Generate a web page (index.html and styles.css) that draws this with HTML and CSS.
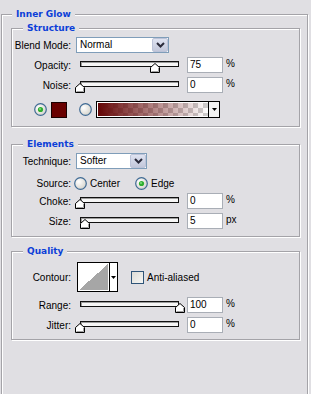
FILE: index.html
```html
<!DOCTYPE html>
<html>
<head>
<meta charset="utf-8">
<link rel="stylesheet" href="styles.css">
</head>
<body>
<div class="panel">
  <div class="group outer">
    <div class="legend">Inner Glow</div>

    <div class="group sub structure">
      <div class="legend">Structure</div>
      <div class="row r-blend">
        <span class="lbl">Blend Mode:</span>
        <div class="combo combo-blend">
          <span class="combo-val">Normal</span>
          <span class="combo-btn"><svg width="9" height="6" viewBox="0 0 9 6"><polyline points="1,1 4.5,4.5 8,1" fill="none" stroke="#2a2a3a" stroke-width="2"/></svg></span>
        </div>
      </div>
      <div class="row r-slider r-first">
        <span class="lbl">Opacity:</span>
        <div class="slider"><div class="track"></div><svg class="thumb" style="left:76px" width="10" height="10" viewBox="0 0 10 10"><polygon points="0.5,4.5 5,0.5 9.5,4.5 9.5,9.5 0.5,9.5" fill="#fff" stroke="#000"/><polyline points="8.5,5 8.5,8.5 1.5,8.5" fill="none" stroke="#a0a0a0"/></svg></div>
        <div class="num">75</div><span class="unit">%</span>
      </div>
      <div class="row r-slider">
        <span class="lbl">Noise:</span>
        <div class="slider"><div class="track"></div><svg class="thumb" style="left:1px" width="10" height="10" viewBox="0 0 10 10"><polygon points="0.5,4.5 5,0.5 9.5,4.5 9.5,9.5 0.5,9.5" fill="#fff" stroke="#000"/><polyline points="8.5,5 8.5,8.5 1.5,8.5" fill="none" stroke="#a0a0a0"/></svg></div>
        <div class="num">0</div><span class="unit">%</span>
      </div>
      <div class="row r-color">
        <svg class="radio r-first-radio" width="13" height="13" viewBox="0 0 13 13"><defs><radialGradient id="rg1" cx="0.35" cy="0.35" r="0.7"><stop offset="0" stop-color="#ffffff"/><stop offset="1" stop-color="#d6d4cc"/></radialGradient></defs><circle cx="6.5" cy="6.5" r="5.8" fill="url(#rg1)" stroke="#3f6a94" stroke-width="1.2"/><circle cx="6.5" cy="6.5" r="2.6" fill="#2fae2f"/><circle cx="6" cy="6" r="1" fill="#7fdc7f"/></svg>
        <div class="swatch"></div>
        <svg class="radio r-second-radio" width="13" height="13" viewBox="0 0 13 13"><defs><radialGradient id="rg2" cx="0.35" cy="0.35" r="0.7"><stop offset="0" stop-color="#ffffff"/><stop offset="1" stop-color="#d6d4cc"/></radialGradient></defs><circle cx="6.5" cy="6.5" r="5.8" fill="url(#rg2)" stroke="#3f6a94" stroke-width="1.2"/></svg>
        <div class="gradbox">
          <div class="grad"></div>
          <div class="drop"><svg width="5" height="3" viewBox="0 0 5 3"><polygon points="0,0 5,0 2.5,3" fill="#000"/></svg></div>
        </div>
      </div>
    </div>

    <div class="group sub elements">
      <div class="legend">Elements</div>
      <div class="row r-tech">
        <span class="lbl">Technique:</span>
        <div class="combo combo-tech">
          <span class="combo-val">Softer</span>
          <span class="combo-btn"><svg width="9" height="6" viewBox="0 0 9 6"><polyline points="1,1 4.5,4.5 8,1" fill="none" stroke="#2a2a3a" stroke-width="2"/></svg></span>
        </div>
      </div>
      <div class="row r-source">
        <span class="lbl">Source:</span>
        <label class="opt opt-center">
          <svg class="radio" width="13" height="13" viewBox="0 0 13 13"><defs><radialGradient id="rg3" cx="0.35" cy="0.35" r="0.7"><stop offset="0" stop-color="#ffffff"/><stop offset="1" stop-color="#d6d4cc"/></radialGradient></defs><circle cx="6.5" cy="6.5" r="5.8" fill="url(#rg3)" stroke="#3f6a94" stroke-width="1.2"/></svg>
          <span>Center</span>
        </label>
        <label class="opt">
          <svg class="radio" width="13" height="13" viewBox="0 0 13 13"><defs><radialGradient id="rg4" cx="0.35" cy="0.35" r="0.7"><stop offset="0" stop-color="#ffffff"/><stop offset="1" stop-color="#d6d4cc"/></radialGradient></defs><circle cx="6.5" cy="6.5" r="5.8" fill="url(#rg4)" stroke="#3f6a94" stroke-width="1.2"/><circle cx="6.5" cy="6.5" r="2.6" fill="#2fae2f"/><circle cx="6" cy="6" r="1" fill="#7fdc7f"/></svg>
          <span>Edge</span>
        </label>
      </div>
      <div class="row r-slider r-choke">
        <span class="lbl">Choke:</span>
        <div class="slider"><div class="track"></div><svg class="thumb" style="left:1px" width="10" height="10" viewBox="0 0 10 10"><polygon points="0.5,4.5 5,0.5 9.5,4.5 9.5,9.5 0.5,9.5" fill="#fff" stroke="#000"/><polyline points="8.5,5 8.5,8.5 1.5,8.5" fill="none" stroke="#a0a0a0"/></svg></div>
        <div class="num">0</div><span class="unit">%</span>
      </div>
      <div class="row r-slider">
        <span class="lbl">Size:</span>
        <div class="slider"><div class="track"></div><svg class="thumb" style="left:6px" width="10" height="10" viewBox="0 0 10 10"><polygon points="0.5,4.5 5,0.5 9.5,4.5 9.5,9.5 0.5,9.5" fill="#fff" stroke="#000"/><polyline points="8.5,5 8.5,8.5 1.5,8.5" fill="none" stroke="#a0a0a0"/></svg></div>
        <div class="num">5</div><span class="unit">px</span>
      </div>
    </div>

    <div class="group sub quality">
      <div class="legend">Quality</div>
      <div class="row r-contour">
        <span class="lbl">Contour:</span>
        <div class="contour">
          <div class="curve"></div>
          <div class="cdrop"><svg width="5" height="3" viewBox="0 0 5 3"><polygon points="0,0 5,0 2.5,3" fill="#000"/></svg></div>
        </div>
        <span class="check"></span>
        <span class="check-lbl">Anti-aliased</span>
      </div>
      <div class="row r-slider r-range">
        <span class="lbl">Range:</span>
        <div class="slider"><div class="track"></div><svg class="thumb" style="left:101px" width="10" height="10" viewBox="0 0 10 10"><polygon points="0.5,4.5 5,0.5 9.5,4.5 9.5,9.5 0.5,9.5" fill="#fff" stroke="#000"/><polyline points="8.5,5 8.5,8.5 1.5,8.5" fill="none" stroke="#a0a0a0"/></svg></div>
        <div class="num">100</div><span class="unit">%</span>
      </div>
      <div class="row r-slider">
        <span class="lbl">Jitter:</span>
        <div class="slider"><div class="track"></div><svg class="thumb" style="left:1px" width="10" height="10" viewBox="0 0 10 10"><polygon points="0.5,4.5 5,0.5 9.5,4.5 9.5,9.5 0.5,9.5" fill="#fff" stroke="#000"/><polyline points="8.5,5 8.5,8.5 1.5,8.5" fill="none" stroke="#a0a0a0"/></svg></div>
        <div class="num">0</div><span class="unit">%</span>
      </div>
    </div>
  </div>
</div>
</body>
</html>
```

FILE: styles.css
```css
* { box-sizing: border-box; }
html, body { margin: 0; padding: 0; }
body {
  background: #e0dfe3;
  font-family: "Liberation Sans", Arial, sans-serif;
  font-size: 10px;
  color: #000;
  width: 311px;
  height: 394px;
  overflow: hidden;
}
.panel { padding: 14px 0 0 1px; }

.group {
  border: 1px solid #a4a3a8;
  box-shadow: inset 1px 1px 0 #fff, 1px 1px 0 #fff;
}
.outer {
  width: 307px;
  height: 380px;
  border-bottom: 0;
}
.legend {
  width: fit-content;
  height: 13px;
  margin: -7px 0 0 11px;
  padding: 0 4px;
  line-height: 13px;
  background: #e0dfe3;
  color: #0c40d8;
  font-family: "DejaVu Sans", sans-serif;
  font-weight: bold;
  font-size: 9px;
}
.outer > .legend { margin-left: 10px; }

.sub { width: 289px; margin-left: 9px; }
.structure { margin-top: 7px; padding-bottom: 8px; }
.elements { margin-top: 17px; padding-bottom: 7px; }
.quality { margin-top: 14px; padding-bottom: 6px; }

.row { display: flex; align-items: center; height: 16px; }
.lbl { width: 59px; flex: none; text-align: right; white-space: nowrap; }

.r-blend, .r-tech { margin-top: 2px; }
.r-slider { margin-top: 4px; align-items: flex-start; }
.r-slider .lbl { align-self: center; }
.r-color { margin-top: 8px; height: 17px; }
.r-source { margin-top: 7px; height: 14px; }
.r-choke { margin-top: 3px; }
.r-contour { margin-top: 4px; height: 30px; }
.r-range { margin-top: 5px; }

/* combo box */
.combo {
  display: flex;
  height: 16px;
  margin-left: 5px;
  border: 1px solid #7f9db9;
  background: #fff;
}
.combo-blend { width: 93px; }
.combo-tech { width: 71px; }
.combo-val { flex: 1; padding-left: 3px; line-height: 14px; }
.combo-btn {
  width: 16px;
  height: 14px;
  display: flex;
  align-items: center;
  justify-content: center;
  border: 1px solid #bcc3d8;
  border-radius: 2px;
  background: linear-gradient(#dfe3f1, #c2c7da);
}

/* slider */
.slider {
  position: relative;
  width: 113px;
  height: 14px;
  margin: 4px 0 0 3px;
  flex: none;
}
.track {
  width: 99px;
  height: 6px;
  margin-left: 6px;
  border: 1px solid #111;
  background: #f6f6f6;
  box-shadow: inset 1px 1px 0 #9c9c9c;
}
.thumb { position: absolute; top: 2px; display: block; }

.num {
  width: 36px;
  height: 16px;
  flex: none;
  border: 1px solid #a9aeb6;
  background: #fff;
  padding-left: 2px;
  line-height: 14px;
}
.unit { margin: 1px 0 0 3px; line-height: 12px; }

/* colour row */
.radio { display: block; flex: none; }
.r-first-radio { margin-left: 22px; }
.swatch {
  width: 16px;
  height: 16px;
  margin-left: 4px;
  background: #690000;
  border: 1px solid #1a0000;
}
.r-second-radio { margin-left: 12px; }
.gradbox {
  display: flex;
  width: 124px;
  height: 17px;
  margin-left: 4px;
  border: 1px solid #000;
  padding: 1px;
  background: #fff;
}
.grad {
  flex: 1;
  background:
    linear-gradient(to right, rgba(100, 6, 6, 1), rgba(100, 6, 6, 0)),
    repeating-conic-gradient(#cfcfcf 0 25%, #ffffff 0 50%) 0 0 / 10px 10px;
}
.drop {
  width: 11px;
  display: flex;
  align-items: center;
  justify-content: center;
  border-left: 1px solid #000;
  margin: -1px -1px -1px 0;
  background: #f2f2f2;
}
.drop svg, .cdrop svg { display: block; }

/* source */
.opt { display: flex; align-items: center; gap: 3px; }
.opt-center { width: 61px; margin-left: 3px; }

/* contour */
.contour {
  display: flex;
  width: 41px;
  height: 30px;
  margin-left: 6px;
  border: 1px solid #000;
  background: #fff;
}
.curve {
  width: 29px;
  margin: 1px;
  background: linear-gradient(to bottom right, #ffffff 50%, #a6a6a6 50%);
}
.cdrop {
  flex: 1;
  display: flex;
  align-items: center;
  justify-content: center;
  border-left: 1px solid #000;
  background: #fff;
}
.check {
  width: 13px;
  height: 13px;
  margin-left: 13px;
  border: 1px solid #2f5478;
  background: linear-gradient(135deg, #dcdbd5, #f6f6f4);
  flex: none;
}
.check-lbl { margin-left: 3px; }
```
